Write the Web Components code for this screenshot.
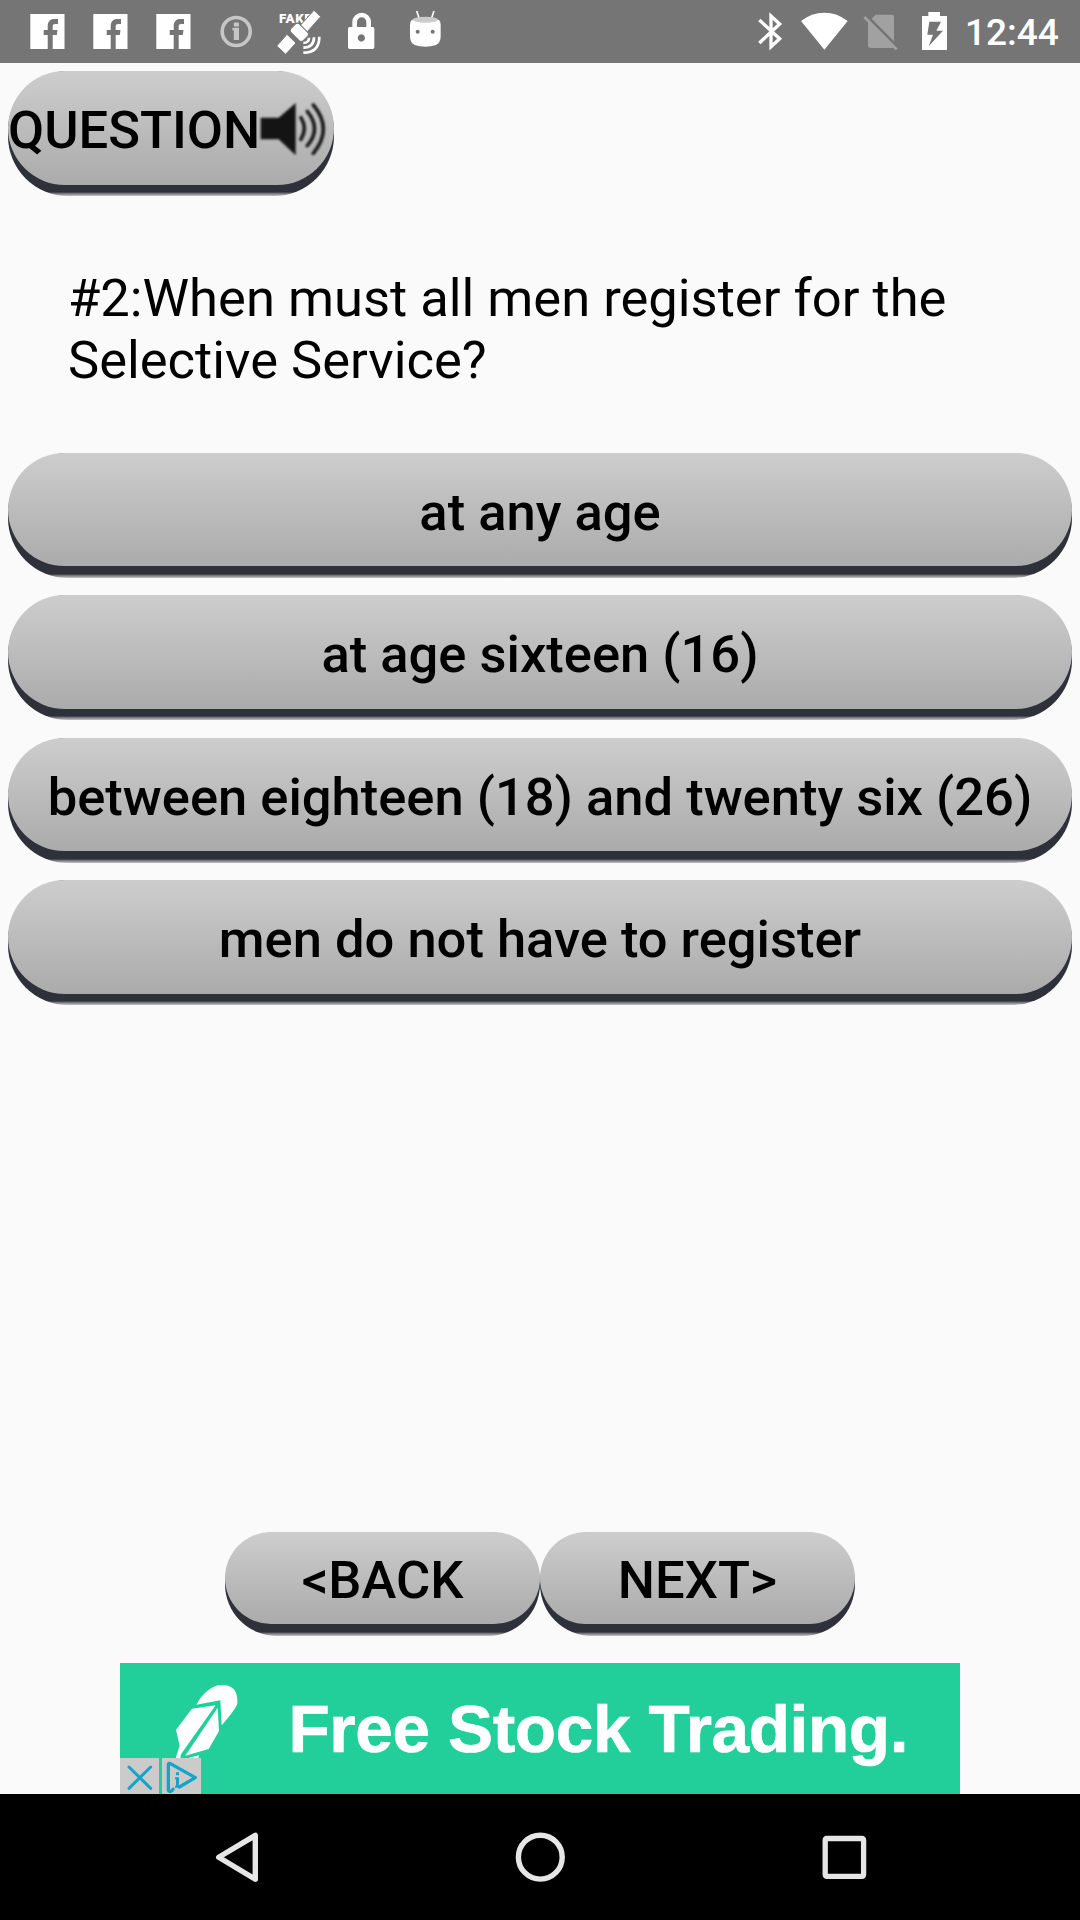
<!DOCTYPE html>
<html lang="en">
<head>
<meta charset="utf-8">
<title>Quiz</title>
<style>
body{margin:0;background:#fafafa;font-family:Roboto,sans-serif;color:#000}
</style>
</head>
<body>
<quiz-app></quiz-app>
<script>
const define = (name, html) => customElements.define(name, class extends HTMLElement {
  constructor() {
    super();
    this.attachShadow({mode: 'open'}).innerHTML = html;
  }
});

/* Icon drawings: [width, height, viewBox, markup] */
const ICONS = {
  facebook: [63, 63, '0 0 63 63', '<path fill="#fff" fill-rule="evenodd" d="M30.3 14h-16v35h17.4V35h-4v-5h4v-3.500c0-5 2.300-7.500 6.800-7.500H42v5h-2.700c-2 0-2.600.800-2.600 2.600V30h4.800l-.7 5h-4.100v14h11.800V14z"/>'],
  info: [63, 63, '0 0 63 63', '<g fill="#c6c6c6"><circle cx="31.200" cy="31.500" r="14" fill="none" stroke="#c6c6c6" stroke-width="3.600"/><rect x="28.800" y="22.500" width="5.200" height="4" rx="1"/><path d="M27.500 27.800H34V40h-5.200v-9.500h-1.300z"/></g>'],
  satellite: [63, 63, '84 0 189 189', '<g fill="#fff"><text x="117" y="68" font-family="Roboto" font-weight="900" font-size="40" textLength="98">FAKE</text><g stroke="#757575" stroke-width="3"><path d="M222 31l20 19-41 46-20-20z"/><path d="M141 103l27 26-31 34-27-25z"/><rect x="-18" y="-26" width="36" height="52" rx="10" transform="translate(178 97) rotate(-45)"/></g><g fill="none" stroke="#fff" stroke-width="8"><path d="M238 110c0 32-16 48-48 48M222 112c0 20-11 31-32 31M207 113c0 10-7 16-17 16"/></g></g>'],
  lock: [63, 63, '273 0 189 189', '<path fill="none" stroke="#fff" stroke-width="14" d="M344 86V66a21 21 0 0 1 42 0v20"/><path fill="#fff" fill-rule="evenodd" d="M329 81h69q5 0 5 5v56q0 5-5 5h-69q-5 0-5-5V86q0-5 5-5zm35 22a11 11 0 1 0 .1 0z"/>'],
  android: [63, 63, '462 0 189 189', '<path stroke="#fff" stroke-width="5" d="M530 33l8 23M582 33l-8 23"/><path fill="#fff" d="M515 60q41-14 82 0 5 4 5 16v32q0 20-14 27-32 10-64 0-14-7-14-27V76q0-12 5-16z"/><ellipse cx="556" cy="59" rx="37" ry="9" fill="#cbcbcb"/><circle cx="533" cy="95" r="6" fill="#757575"/><circle cx="578" cy="95" r="6" fill="#757575"/>'],
  bluetooth: [32, 63, '45 0 96 189', '<path fill="none" stroke="#fff" stroke-width="10" d="M58 60l61 56-26 24V48l26 24-61 57"/>'],
  wifi: [47, 63, '183 0 141 189', '<path fill="#fff" d="M253 149L183 63q31-25 70-25t70 25z"/>'],
  nosim: [37, 63, '366 0 111 189', '<path fill="#a1a1a1" d="M407 44h49q6 0 6 6v86q0 8-8 8h-62q-8 0-8-8V67z"/><path stroke="#757575" stroke-width="8" d="M378 45l95 96"/><path stroke="#a1a1a1" stroke-width="8" d="M373 51l97 97"/>'],
  battery: [40, 63, '519 0 120 189', '<path fill="#fff" fill-rule="evenodd" d="M565 36h35v12h21v102h-75V48h19zm3 29l-6 39h17l-13 35 43-47h-20l14-27z"/>'],
  speaker: [66, 54, '780 124 198 162', '<path fill="#141414" d="M782 168h54l51-44v157l-51-48h-54z"/><path fill="none" stroke="#1c1c1c" stroke-width="11" stroke-linecap="round" d="M903 168q20 33 0 65M922 149q43 53 0 103M940 130q60 72 0 145"/>'],
  back: [126, 126, '0 0 126 126', '<path fill="none" stroke="#e6e6e6" stroke-width="5.400" stroke-linejoin="round" d="M44.700 63.300L81.300 41.400V85.300z"/>'],
  home: [126, 126, '0 0 126 126', '<circle cx="63.300" cy="63.200" r="21.900" fill="none" stroke="#e6e6e6" stroke-width="5.400"/>'],
  recents: [126, 126, '0 0 126 126', '<rect x="44.200" y="44.500" width="38.400" height="37.800" rx="1.500" fill="none" stroke="#e6e6e6" stroke-width="5.300"/>'],
  feather: [62, 73, '198 104 186 219', '<g fill="#fff"><path d="M259 163q25-46 64-58 62-8 59 53-1 14-47 67l-4-75z"/><path d="M246 175l71-10-102 144q-5 8-3 14h-15l12-37-11-48z"/><path d="M323 172l4 70-31 54-70 20z"/><path d="M235 323l32-8-2 8z"/></g>'],
  close: [39, 37, '30 321 117 111', '<path stroke="#16a3c9" stroke-width="9" stroke-linecap="round" d="M57 348l65 64M122 348l-65 64"/>'],
  adchoices: [39, 37, '157 321 117 111', '<path fill="none" stroke="#16a3c9" stroke-width="10" stroke-linejoin="round" stroke-linecap="round" d="M190 415c-4 8-14 9-14 1v-75q0-5 6-3l75 42-48 28"/><path fill="#16a3c9" d="M199 364h9v9h-9zM196 379h12v25h4v6h-16v-6h3v-19h-3z"/>']
};

customElements.define('ui-icon', class extends HTMLElement {
  connectedCallback() {
    const [w, h, box, body] = ICONS[this.getAttribute('name')];
    if (!this.shadowRoot) this.attachShadow({mode: 'open'});
    this.shadowRoot.innerHTML = `<style>:host{display:block;flex:none}svg{display:block}</style><svg width="${w}" height="${h}" viewBox="${box}">${body}</svg>`;
  }
});

define('status-bar', `
<style>
:host{display:flex;align-items:center;justify-content:space-between;height:63px;background:#757575;color:#fff;padding:0 21px 0 16px;box-sizing:border-box}
.left,.right{display:flex;align-items:center}
.right{gap:14px}
time{font-size:37px;font-weight:500;line-height:63px;width:94px;margin-left:-2px;white-space:nowrap;padding-top:1px;box-sizing:border-box;height:63px}
</style>
<div class="left"><ui-icon name="facebook"></ui-icon><ui-icon name="facebook"></ui-icon><ui-icon name="facebook"></ui-icon><ui-icon name="info"></ui-icon><ui-icon name="satellite"></ui-icon><ui-icon name="lock"></ui-icon><ui-icon name="android"></ui-icon></div>
<div class="right"><ui-icon name="bluetooth"></ui-icon><ui-icon name="wifi"></ui-icon><ui-icon name="nosim"></ui-icon><ui-icon name="battery"></ui-icon><time>12:44</time></div>`);

define('pill-button', `
<style>
:host{display:block;box-sizing:border-box;height:var(--h,125px);padding-bottom:11.500px;border-radius:60px;
background:linear-gradient(#2e313a calc(100% - 4px),#77777b calc(100% - 2.500px),#c4c4c4 100%)}
button{all:unset;display:flex;align-items:center;justify-content:var(--align,center);box-sizing:border-box;width:100%;height:100%;border-radius:60px;
background:linear-gradient(#cdcdcd,#ababab);font:500 52.500px/62px Roboto,sans-serif;color:#000;white-space:nowrap;padding-top:var(--drop,5px)}
</style>
<button><slot></slot></button>`);

define('ad-banner', `
<style>
:host{display:flex;width:840px;height:131px;background:#22cf9a;color:#fff}
.art{display:flex;flex-direction:column;justify-content:space-between;width:152px;flex:none}
.logo{padding:21.500px 0 0 55.500px}
.tags{display:flex;gap:3px}
.tags ui-icon{background:#cbcbcb}
svg{display:block}
text{font:bold 67.500px "Liberation Sans",sans-serif;fill:#fff;stroke:#fff;stroke-width:.7px}
</style>
<div class="art"><div class="logo"><ui-icon name="feather"></ui-icon></div><div class="tags"><ui-icon name="close"></ui-icon><ui-icon name="adchoices"></ui-icon></div></div>
<svg width="688" height="131"><text x="16.500" y="89" textLength="620">Free Stock Trading.</text></svg>`);

define('nav-bar', `
<style>
:host{display:flex;justify-content:center;gap:177.500px;height:126px;background:#000}
</style>
<ui-icon name="back"></ui-icon><ui-icon name="home"></ui-icon><ui-icon name="recents"></ui-icon>`);

define('quiz-app', `
<style>
:host{display:flex;flex-direction:column;width:1080px;height:1920px;background:#fafafa}
main{display:flex;flex-direction:column;flex:1}
.ask{width:326px;margin:8px 0 0 8px;--align:flex-start}
.ask ui-icon{margin-left:-.5px;filter:blur(.8px)}
p{margin:72px 68px 0;font-size:52.500px;line-height:61.500px;height:184.500px}
.answers{display:flex;flex-direction:column;gap:17.500px;padding:0 8px}
.pager{display:flex;justify-content:center;margin-top:auto;margin-bottom:27.500px}
.pager pill-button{width:315px;--h:104px}
ad-banner{align-self:center}
</style>
<status-bar></status-bar>
<main>
<pill-button class="ask">QUESTION<ui-icon name="speaker"></ui-icon></pill-button>
<p>#2:When must all men register for the Selective Service?</p>
<div class="answers">
<pill-button>at any age</pill-button>
<pill-button>at age sixteen (16)</pill-button>
<pill-button>between eighteen (18) and twenty six (26)</pill-button>
<pill-button>men do not have to register</pill-button>
</div>
<div class="pager"><pill-button>&lt;BACK</pill-button><pill-button>NEXT&gt;</pill-button></div>
<ad-banner></ad-banner>
</main>
<nav-bar></nav-bar>`);
</script>
</body>
</html>
